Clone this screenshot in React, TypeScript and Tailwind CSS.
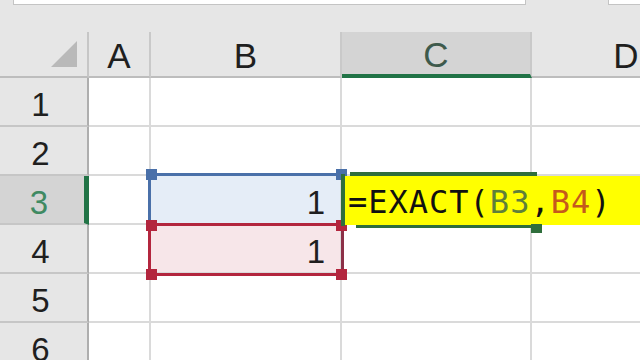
import React from "react";

const cols = [
  { key: "A", w: "w-[62px]" },
  { key: "B", w: "w-[191px]" },
  { key: "C", w: "w-[190px]" },
  { key: "D", w: "w-[190px]" },
];

const rows = [1, 2, 3, 4, 5, 6];

function cellBg(col: string, row: number) {
  if (col === "B" && row === 3) return "bg-[#e5edf7]";
  if (col === "B" && row === 4) return "bg-[#f7e6e9]";
  return "bg-white";
}

function cellValue(col: string, row: number) {
  if (col === "B" && (row === 3 || row === 4)) return "1";
  return "";
}

// Small square handle at a corner of a range reference border
function Handle({ pos, color }: { pos: string; color: string }) {
  return <span className={`absolute w-[11px] h-[11px] ${pos} ${color}`} />;
}

export default function App() {
  return (
    <div className="relative w-[640px] h-[360px] overflow-hidden bg-[#e6e6e6] font-['Liberation_Sans',sans-serif] text-[#1f1f1f]">
      {/* name box / formula bar edges */}
      <div className="flex h-[32px] items-start pl-[13px] gap-[82px]">
        <div className="w-[513px] h-[5px] bg-white border border-t-0 border-[#c4c4c4]" />
        <div className="flex-1 h-[5px] bg-white border border-t-0 border-r-0 border-[#c4c4c4]" />
      </div>

      {/* column headers */}
      <div className="flex h-[46px]">
        <div className="w-[89px] shrink-0 flex items-end justify-end pr-[10px] pb-[9px] border-r-2 border-b-2 border-r-[#c6c6c6] border-b-[#bdbdbd]">
          <svg width="26" height="26" viewBox="0 0 26 26">
            <polygon points="26,0 26,26 0,26" fill="#b9b9b9" />
          </svg>
        </div>
        {cols.map((c) => (
          <div
            key={c.key}
            className={`${c.w} shrink-0 flex items-center justify-center pt-[2px] text-[35px] leading-none border-r-2 border-r-[#c9c9c9] ${
              c.key === "C"
                ? "bg-[#d4d4d4] border-b-4 border-b-[#217346] text-[#3e5a4c]"
                : "border-b-2 border-b-[#bdbdbd]"
            }`}
          >
            {c.key}
          </div>
        ))}
      </div>

      {/* grid rows */}
      {rows.map((r) => (
        <div key={r} className="flex h-[49px]">
          <div
            className={`w-[89px] shrink-0 flex items-center justify-center pt-[6px] pr-[6px] text-[33px] leading-none border-b-2 border-b-[#c6c6c6] ${
              r === 3
                ? "bg-[#d4d4d4] border-r-[5px] border-r-[#217346] text-[#3f8a62]"
                : "border-r-2 border-r-[#aeaeae]"
            }`}
          >
            {r}
          </div>
          {cols.map((c) => (
            <div
              key={c.key}
              className={`${c.w} shrink-0 flex items-center justify-end pr-[15px] pt-[6px] text-[33px] leading-none border-r-2 border-b-2 border-[#dadada] ${cellBg(c.key, r)}`}
            >
              {cellValue(c.key, r)}
            </div>
          ))}
        </div>
      ))}

      {/* range references B3 (blue) and B4 (red) */}
      <div className="absolute left-[148px] top-[173px] w-[196px] flex flex-col">
        <div className="relative h-[53px] border-[3px] border-[#4a70a9]">
          <Handle pos="-left-[5px] -top-[7px]" color="bg-[#4a70a9]" />
          <Handle pos="-right-[6px] -top-[7px]" color="bg-[#4a70a9]" />
        </div>
        <div className="relative -mt-[3px] h-[53px] border-[3px] border-[#b3263e] border-r-[#8c3148]">
          <Handle pos="-left-[5px] -top-[6px]" color="bg-[#b3263e]" />
          <Handle pos="-right-[6px] -top-[6px]" color="bg-[#b3263e]" />
          <Handle pos="-left-[5px] -bottom-[7px]" color="bg-[#b3263e]" />
          <Handle pos="-right-[6px] -bottom-[7px]" color="bg-[#b3263e]" />
        </div>
      </div>

      {/* in-cell editor on C3 */}
      <div className="absolute left-[341px] top-[172px] right-0 h-[56px] flex">
        <div className="w-[4px] mt-[2px] mb-[2px] bg-[#2f6e3c]" />
        <div className="relative flex-1 flex flex-col">
          <div className="ml-[5px] w-[187px] h-[4px] bg-[#2f6e3c]" />
          <div className="flex-1 flex items-center pl-[3px] pt-[3px] bg-[#ffff00] font-['DejaVu_Sans_Mono',monospace] text-[32px] tracking-[1px] leading-none text-[#111]">
            <span>=EXACT(</span>
            <span className="text-[#5f7f3a]">B3</span>
            <span>,</span>
            <span className="text-[#c55a1c]">B4</span>
            <span>)</span>
          </div>
          <div className="ml-[11px] w-[180px] h-[3px] bg-[#2f6e3c]" />
          <span className="absolute left-[186px] top-[52px] w-[11px] h-[9px] bg-[#2f6e3c]" />
        </div>
      </div>
    </div>
  );
}
